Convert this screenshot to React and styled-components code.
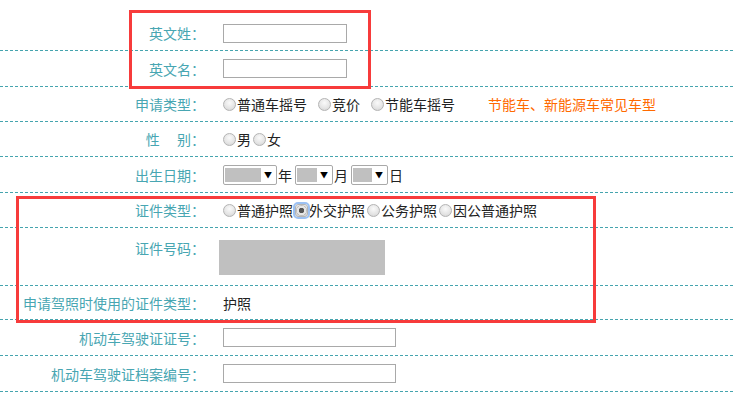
import React from 'react';
import styled, { createGlobalStyle } from 'styled-components';

const GlobalStyle = createGlobalStyle`
  html, body {
    margin: 0;
    padding: 0;
    background: #fff;
  }
  body {
    font-family: "Noto Sans CJK SC", "Liberation Sans", sans-serif;
    font-size: 14px;
  }
`;

const Page = styled.div`
  position: relative;
  width: 735px;
  height: 399px;
  overflow: hidden;
  padding-top: 16px;
  box-sizing: border-box;
`;

// dashed rule drawn as a 3px-on / 2px-off pattern along the bottom edge
const Row = styled.div`
  display: flex;
  align-items: ${p => (p.$top ? 'flex-start' : 'center')};
  height: ${p => p.$h}px;
  padding-top: ${p => (p.$top ? 10 : 0)}px;
  padding-bottom: 1px;
  box-sizing: content-box;
  background: linear-gradient(to right, #45a4ae 60%, transparent 60%) left bottom / 5px 1px repeat-x;
`;

const Label = styled.div`
  width: 205px;
  flex-shrink: 0;
  text-align: right;
  color: #48a6b2;
  font-size: 14px;
  line-height: 20px;
  white-space: pre;
`;

const Value = styled.div`
  display: flex;
  align-items: center;
  color: #222;
  font-size: 14px;
  line-height: 20px;
  margin-left: ${p => p.$ml ?? 18}px;
`;

const TextBox = styled.div`
  width: ${p => p.$w}px;
  height: 17px;
  border: 1px solid #a9a9a9;
  background: #fff;
`;

const Option = styled.span`
  display: inline-flex;
  align-items: center;
  margin-right: ${p => p.$gap ?? 2}px;
`;

const Radio = styled.span`
  position: relative;
  display: inline-block;
  width: 11px;
  height: 11px;
  border: 1px solid #b4b4b4;
  background: radial-gradient(circle at 50% 35%, #fafafa 0%, #e4e4e4 60%, #cfcfcf 100%);
  margin-right: 1px;
  flex-shrink: 0;
  outline: ${p => (p.$checked ? '2px solid #9cc1f3' : 'none')};
  border-radius: ${p => (p.$checked ? '3px' : '50%')};

  &::before {
    content: '';
    display: ${p => (p.$checked ? 'block' : 'none')};
    position: absolute;
    inset: 0;
    border-radius: 50%;
    background: radial-gradient(circle, #555 0 2.5px, #e6e6e6 3px 4.5px, #bdbdbd 5px);
  }
`;

const Hint = styled.span`
  color: #ff6a00;
  margin-left: 33px;
`;

const Select = styled.span`
  display: inline-flex;
  align-items: center;
  width: ${p => p.$w}px;
  height: 16px;
  border: 1px solid #a9a9a9;
  border-radius: 2px;
  padding: 1px;
  box-sizing: content-box;
  background: #fff;
`;

const SelectFill = styled.span`
  flex: 1;
  height: 14px;
  background: #c0c0c0;
`;

const Arrow = styled.span`
  width: 14px;
  text-align: center;
  font-size: 8px;
  line-height: 14px;
  color: #000;
`;

const Unit = styled.span`
  margin: 0 3px 0 1px;
`;

const Masked = styled.div`
  width: 166px;
  height: 35px;
  background: #c0c0c0;
  margin-top: 2px;
`;

const Mark = styled.div`
  position: absolute;
  left: ${p => p.$x}px;
  top: ${p => p.$y}px;
  width: ${p => p.$w}px;
  height: ${p => p.$hh}px;
  border: 3px solid #f73b3b;
  box-sizing: border-box;
  pointer-events: none;
`;

function DateSelect({ w, unit }) {
  return (
    <>
      <Select $w={w}>
        <SelectFill />
        <Arrow>▼</Arrow>
      </Select>
      <Unit>{unit}</Unit>
    </>
  );
}

export default function App() {
  return (
    <Page>
      <GlobalStyle />
      <Row $h={34}>
        <Label>英文姓：</Label>
        <Value><TextBox $w={122} /></Value>
      </Row>
      <Row $h={35}>
        <Label>英文名：</Label>
        <Value><TextBox $w={122} /></Value>
      </Row>
      <Row $h={34}>
        <Label>申请类型：</Label>
        <Value>
          <Option $gap={11}><Radio />普通车摇号</Option>
          <Option $gap={11}><Radio />竞价</Option>
          <Option $gap={0}><Radio />节能车摇号</Option>
          <Hint>节能车、新能源车常见车型</Hint>
        </Value>
      </Row>
      <Row $h={34}>
        <Label>{'性\u3000 别：'}</Label>
        <Value>
          <Option><Radio />男</Option>
          <Option><Radio />女</Option>
        </Value>
      </Row>
      <Row $h={35}>
        <Label>出生日期：</Label>
        <Value>
          <DateSelect w={50} unit="年" />
          <DateSelect w={34} unit="月" />
          <DateSelect w={33} unit="日" />
        </Value>
      </Row>
      <Row $h={34}>
        <Label>证件类型：</Label>
        <Value>
          <Option><Radio />普通护照</Option>
          <Option><Radio $checked />外交护照</Option>
          <Option><Radio />公务护照</Option>
          <Option><Radio />因公普通护照</Option>
        </Value>
      </Row>
      <Row $h={47} $top>
        <Label>证件号码：</Label>
        <Value $ml={14}><Masked /></Value>
      </Row>
      <Row $h={33}>
        <Label>申请驾照时使用的证件类型：</Label>
        <Value>护照</Value>
      </Row>
      <Row $h={35}>
        <Label>机动车驾驶证证号：</Label>
        <Value><TextBox $w={171} /></Value>
      </Row>
      <Row $h={35}>
        <Label>机动车驾驶证档案编号：</Label>
        <Value><TextBox $w={171} /></Value>
      </Row>

      <Mark $x={129} $y={10} $w={242} $hh={79} />
      <Mark $x={16} $y={196} $w={580} $hh={127} />
    </Page>
  );
}
